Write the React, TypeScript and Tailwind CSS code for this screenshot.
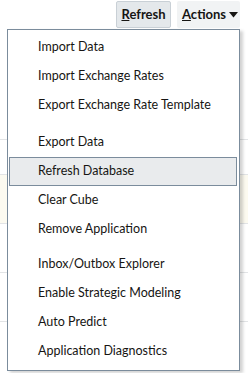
import { Fragment } from "react";

const GROUPS: string[][] = [
  ["Import Data", "Import Exchange Rates", "Export Exchange Rate Template"],
  ["Export Data", "Refresh Database", "Clear Cube", "Remove Application"],
  ["Inbox/Outbox Explorer", "Enable Strategic Modeling", "Auto Predict", "Application Diagnostics"],
];

const ACTIVE = "Refresh Database";

export default function App() {
  return (
    <div
      className="relative w-[248px] h-[373px] overflow-hidden bg-white text-[#161513]"
      style={{ fontFamily: "Lato, 'Noto Sans', sans-serif" }}
    >
      {/* toolbar */}
      <div className="flex justify-end items-start gap-[6px] pt-px pr-[8px] h-[29px]">
        <button className="h-[27px] w-[55px] text-[13px] font-bold bg-[#e4e8eb] border border-[#c9d0d6] rounded-[2px]">
          <span className="underline">R</span>efresh
        </button>
        <button className="h-[27px] w-[63px] pl-[5px] text-[13px] font-bold bg-[#f1f3f4] rounded-[2px] flex items-center gap-[3px]">
          <span>
            <span className="underline">A</span>ctions
          </span>
          <svg width="9" height="6" viewBox="0 0 9 6">
            <path d="M0 0h9L4.5 5.5z" fill="#161513" />
          </svg>
        </button>
      </div>

      {/* page content behind the menu */}
      <div className="flex flex-col">
        <div className="h-[111px] border-b border-[#e2e4e6]" />
        <div className="h-[35px] border-b border-[#e2e4e6]" />
        <div className="h-[49px] border-b border-[#e2e4e6] bg-[#fcfaf0]" />
        <div className="h-[49px] border-b border-[#e2e4e6]" />
        <div className="h-[49px] border-b border-[#e2e4e6]" />
      </div>

      {/* dropdown */}
      <div className="absolute left-[7px] top-[29px] w-[233px] h-[342px] bg-white border border-[#7b8c9c] shadow-[3px_2px_3px_rgba(0,0,0,0.18)] pt-[3px] pl-px pr-[2px]">
        {GROUPS.map((group, gi) => (
          <Fragment key={gi}>
            {gi === 1 && <div className="h-[8px]" />}
            {gi === 2 && <div className="h-[6px]" />}
            {group.map((label) => (
              <div
                key={label}
                className={
                  "h-[29px] flex items-center pl-[28px] text-[12.5px] border " +
                  (label === ACTIVE ? "bg-[#e9ebed] border-[#7b8c9c]" : "border-transparent")
                }
              >
                {label}
              </div>
            ))}
          </Fragment>
        ))}
      </div>
    </div>
  );
}
